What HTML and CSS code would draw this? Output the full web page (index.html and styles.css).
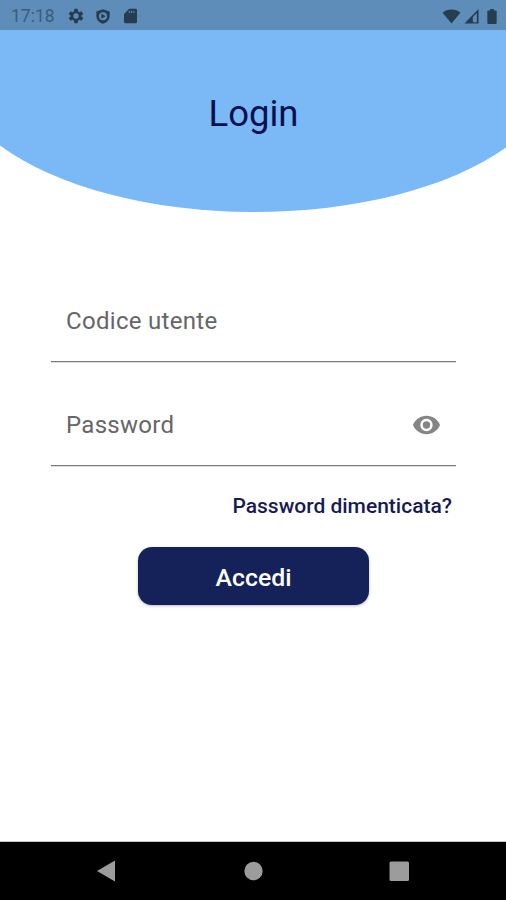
FILE: index.html
```html
<!DOCTYPE html>
<html lang="it">
<head>
<meta charset="utf-8">
<title>Login</title>
<link rel="stylesheet" href="styles.css">
</head>
<body>
<div class="screen">
  <header class="hero">
    <svg class="hero-shape" viewBox="0 0 506 213" aria-hidden="true"><path d="M0 0H506V146.500A304 147 0 0 1 0 144.500Z"/></svg>
    <div class="status">
      <span class="clock">17:18</span>
      <svg class="gear" viewBox="0 0 24 24"><path fill-rule="evenodd" d="M9.500 1h5l.5 4 2 1.200 3.400-1.300 2.500 4.300-2.900 2.100v1.400l2.900 2.100-2.500 4.300-3.400-1.300-2 1.200-.5 4h-5L9 19l-2-1.200-3.400 1.300-2.500-4.300L4 12.700v-1.400L1.100 9.200l2.500-4.300L7 6.200 9 5ZM12 8a4 4 0 1 0 0 8 4 4 0 0 0 0-8Z"/></svg>
      <svg class="shield" viewBox="0 0 24 24"><path fill-rule="evenodd" d="M12 1 2 4.500V11c0 6 4.200 10.500 10 12 5.800-1.500 10-6 10-12V4.500ZM12 5.500a6 6 0 1 1 0 12 6 6 0 0 1 0-12ZM9.500 7.500v8l6.500-4Z"/></svg>
      <svg class="card" viewBox="0 0 20 24" preserveAspectRatio="none"><path fill-rule="evenodd" d="M8 1h10a2 2 0 0 1 2 2v18a2 2 0 0 1-2 2H2a2 2 0 0 1-2-2V9ZM7.500 4v3.500H9V4ZM11 4v3.500h1.500V4ZM14.500 4v3.500H16V4Z"/></svg>
      <svg class="wifi" viewBox="0 0 20 16"><path d="M10 15.500.5 4C5.500-.5 14.500-.5 19.500 4Z"/></svg>
      <svg class="signal" viewBox="0 0 15 16"><path fill-rule="evenodd" d="M0 15.500 15 0v15.500ZM9 8.500V14h4.200V4.200Z"/></svg>
      <svg class="battery" viewBox="0 0 10 16"><path d="M3 0h4v1.500h2q1 0 1 1V15q0 1-1 1H1q-1 0-1-1V2.500q0-1 1-1h2Z"/></svg>
    </div>
    <h1 class="title"><span>Login</span></h1>
  </header>
  <main class="form">
    <div class="field"><span class="label">Codice utente</span></div>
    <div class="field second"><span class="label">Password</span>
      <svg class="eye" viewBox="1 4 22 16"><path d="M12 4.500C7 4.500 2.730 7.610 1 12c1.730 4.390 6 7.500 11 7.500s9.270-3.110 11-7.500c-1.730-4.390-6-7.500-11-7.500ZM12 17c-2.760 0-5-2.240-5-5s2.240-5 5-5 5 2.240 5 5-2.240 5-5 5Zm0-8a3 3 0 1 0 0 6 3 3 0 0 0 0-6Z"/></svg>
    </div>
    <a class="forgot"><span>Password dimenticata?</span></a>
    <button class="submit"><span>Accedi</span></button>
  </main>
  <nav class="navbar">
    <svg viewBox="0 0 506 58" aria-hidden="true"><path d="M97 29 115 18.500V39.500Z"/><circle cx="253.500" cy="29" r="9.200"/><rect x="389.500" y="19.500" width="19.500" height="19.500" rx="1.500"/></svg>
  </nav>
</div>
</body>
</html>
```
FILE: styles.css
```css
* { box-sizing: border-box; }
body { margin: 0; background: #fff; font-family: Roboto, sans-serif; }
.screen { width: 506px; height: 900px; display: flex; flex-direction: column; overflow: hidden; }
.hero { position: relative; height: 213px; flex: none; }
.hero-shape { position: absolute; top: .6px; left: 0; width: 506px; height: 213px; fill: #7ab8f6; }
.status { position: relative; height: 30px; display: flex; align-items: center; padding: 2px 9px 0 11px; background: #5e8db9; fill: #263d50; }
.clock { width: 57px; font-size: 17.500px; line-height: 20px; color: #3d5c7a; }
.status svg { flex: none; display: block; }
.gear { width: 16px; height: 16px; }
.shield { width: 16px; height: 17px; margin-left: 11px; }
.card { width: 13px; height: 16px; margin-left: 13px; }
.wifi { width: 19px; height: 15px; margin-left: auto; }
.signal { width: 15px; height: 15px; margin-left: 3px; }
.battery { width: 10px; height: 15px; margin-left: 8px; }
.title { position: relative; margin: 62px 0 0; padding-left: 1px; font-size: 36.500px; line-height: 44px; font-weight: 400; text-align: center; color: #07104d; }
.form { flex: 1; display: flex; flex-direction: column; padding: 67px 50px 0 51px; }
.field { height: 82px; flex: none; border-bottom: 1px solid #7b7b7b; box-shadow: 0 1px 0 #dedede; display: flex; align-items: center; justify-content: space-between; padding: 0 16px 0 15px; }
.second { margin-top: 22px; }
.label { padding-top: 1px; font-size: 24px; line-height: 30px; letter-spacing: .3px; color: #666; }
.eye { width: 27px; height: 20px; fill: #858585; }
.forgot { align-self: flex-end; margin: 27px 4px 0 0; font-size: 21px; line-height: 26px; font-weight: 500; color: #171b53; }
.submit { align-self: center; margin: 28px 0 0; padding: 2px 0 0; width: 231px; height: 58px; border: 0; border-radius: 14px; background: #152159; color: #fff; font: 500 24.800px Roboto, sans-serif; box-shadow: 0 1px 3px #0004; }
.navbar { height: 58px; flex: none; background: #000; fill: #9c9c9c; box-shadow: 0 -1px 0 #c4c4c4; }
.navbar svg { display: block; width: 506px; height: 58px; }
```
